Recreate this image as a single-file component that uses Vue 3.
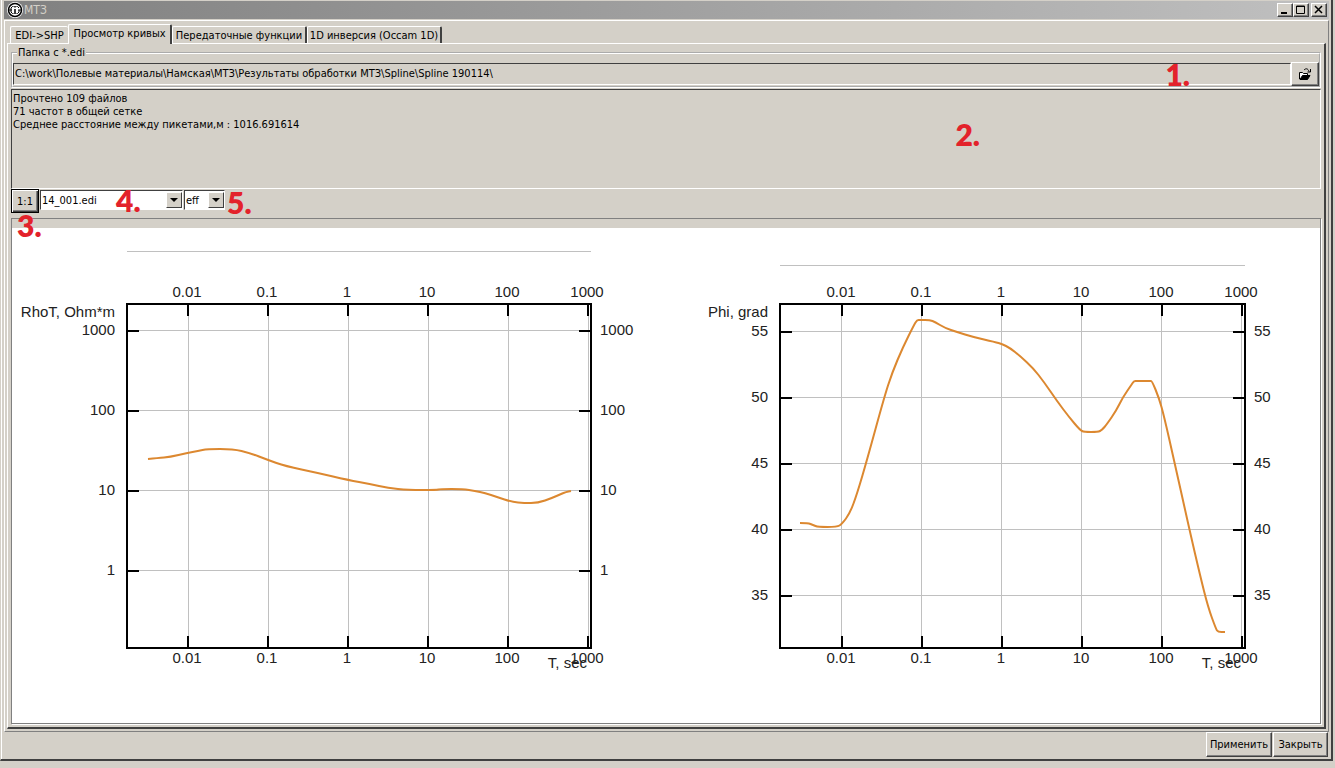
<template>
  <div class="window">
    <header class="title-bar">
      <svg class="logo" viewBox="0 0 16 16" aria-hidden="true">
        <circle cx="8" cy="8" r="8" fill="#fff" />
        <circle cx="8" cy="8" r="6.500" fill="none" stroke="#000" stroke-width="1.500" />
        <path d="M1 8h4M11 8h4M6.500 4.500H5.500L4 6v4l1.500 1.500h1M9.500 4.500h1L12 6M12 8v2l-1.500 1.500h-1" fill="none" stroke="#000" />
        <path d="M8 7v5M8 4v1.500" fill="none" stroke="#000" stroke-width="1.500" />
      </svg>
      <h1>МТЗ</h1>
      <div class="window-buttons">
        <button type="button" aria-label="Свернуть">
          <svg viewBox="0 0 12 10"><path d="M2 8h6" stroke="#000" stroke-width="2" /></svg>
        </button>
        <button type="button" aria-label="Развернуть">
          <svg viewBox="0 0 12 10"><path d="M1.500 1h8v7.500h-8zM1 1.500h9" fill="none" stroke="#000" /></svg>
        </button>
        <button type="button" class="close" aria-label="Закрыть окно">
          <svg viewBox="0 0 12 10"><path d="M2 1l7 7M9 1L2 8" stroke="#000" stroke-width="1.500" /></svg>
        </button>
      </div>
    </header>

    <main class="body">
      <nav class="tabs" role="tablist">
        <button
          v-for="tab in tabs"
          :key="tab.key"
          type="button"
          role="tab"
          :class="['tab', tab.key, { active: tab.key === activeTab }]"
          :aria-selected="tab.key === activeTab"
          @click="activeTab = tab.key"
        >{{ tab.label }}</button>
      </nav>

      <section class="page">
        <fieldset class="folder">
          <legend><label for="folder">Папка с *.edi</label></legend>
          <div class="folder-row">
            <input id="folder" v-model="folder" type="text" readonly />
            <button type="button" class="open" aria-label="Открыть папку">
              <svg viewBox="0 0 14 14">
                <path d="M1.500 12V5.500h3l1 1h4v2" fill="#fff" stroke="#000" />
                <path d="M2 12.500l2.500-4H12l-2.500 4z" fill="#000" stroke="#000" />
                <path d="M6 3c2-2 4-1.500 5 1.500M12.500 2v3H9.500" fill="none" stroke="#000" />
              </svg>
            </button>
          </div>
          <span class="mark mark-1">1.</span>
        </fieldset>

        <div class="log-wrap">
          <textarea v-model="log" class="log" aria-label="Журнал" readonly></textarea>
          <span class="mark mark-2">2.</span>
        </div>

        <div class="toolbar">
          <button type="button" class="scale">1:1</button>
          <div class="combo file">
            <select v-model="file" aria-label="Файл">
              <option>14_001.edi</option>
            </select>
            <span class="arrow"></span>
          </div>
          <div class="combo component">
            <select v-model="component" aria-label="Компонента">
              <option>eff</option>
            </select>
            <span class="arrow"></span>
          </div>
          <span class="mark mark-3">3.</span>
          <span class="mark mark-4">4.</span>
          <span class="mark mark-5">5.</span>
        </div>

        <div class="charts">
          <svg v-for="chart in charts" :key="chart.title" class="chart" viewBox="0 0 654 480" role="img" :aria-label="chart.title">
            <line class="grid" :x1="chart.left" :x2="chart.right" :y1="chart.rule" :y2="chart.rule" />
            <g class="grid">
              <line v-for="tick in chart.x" :key="tick.label" :x1="tick.at + chart.gridShift" :x2="tick.at + chart.gridShift" :y1="top" :y2="bottom" />
              <line v-for="tick in chart.y" :key="tick.label" :x1="chart.left" :x2="chart.right" :y1="tick.at - 0.5" :y2="tick.at - 0.5" />
            </g>
            <g class="axis">
              <rect :x="chart.left" :y="top" :width="chart.right - chart.left" :height="bottom - top" />
              <path v-for="tick in chart.x" :key="tick.label" :d="`M${tick.at} ${top}v12M${tick.at} ${bottom}v-12`" />
              <path v-for="tick in chart.y" :key="tick.label" :d="`M${chart.left} ${tick.at}h12M${chart.right} ${tick.at}h-12`" />
            </g>
            <path class="curve" :d="smooth(chart.points)" />
            <g class="labels">
              <g v-for="tick in chart.x" :key="tick.label" text-anchor="middle">
                <text :x="tick.at - 1" :y="top - 7">{{ tick.label }}</text>
                <text :x="tick.at - 1" :y="bottom + 15">{{ tick.label }}</text>
              </g>
              <g v-for="tick in chart.y" :key="tick.label">
                <text :x="chart.left - 12" :y="tick.at + 4" text-anchor="end">{{ tick.label }}</text>
                <text :x="chart.right + 9" :y="tick.at + 4">{{ tick.label }}</text>
              </g>
              <text :x="chart.left - 12" :y="top + 13" text-anchor="end">{{ chart.title }}</text>
              <text :x="chart.right - 4" :y="bottom + 20" text-anchor="end">T, sec</text>
            </g>
          </svg>
        </div>
      </section>
    </main>

    <footer class="actions">
      <button type="button" class="apply">Применить</button>
      <button type="button" class="dismiss">Закрыть</button>
    </footer>
  </div>
</template>

<script setup>
import { ref } from 'vue'

const tabs = [
  { key: 'shp', label: 'EDI->SHP' },
  { key: 'curves', label: 'Просмотр кривых' },
  { key: 'transfer', label: 'Передаточные функции' },
  { key: 'inversion', label: '1D инверсия (Occam 1D)' }
]

const activeTab = ref('curves')
const folder = ref('C:\\work\\Полевые материалы\\Намская\\МТЗ\\Результаты обработки МТЗ\\Spline\\Spline 190114\\')
const log = ref('Прочтено 109 файлов\n71 частот в общей сетке\nСреднее расстояние между пикетами,м : 1016.691614')
const file = ref('14_001.edi')
const component = ref('eff')

// vertical extent shared by both plots
const top = 76
const bottom = 420

const periods = ['0.01', '0.1', '1', '10', '100', '1000']

function ticks(labels, start, step) {
  return labels.map((label, i) => ({ label, at: start + i * step }))
}

// rounds the corners by running quadratic segments through the midpoints
function smooth(points) {
  const list = points.split(' ').map((pair) => pair.split(',').map(Number))
  const parts = [`M${list[0]}`]
  for (let i = 1; i < list.length - 1; i++) {
    const [x, y] = list[i]
    const [nextX, nextY] = list[i + 1]
    parts.push(`Q${x} ${y} ${(x + nextX) / 2} ${(y + nextY) / 2}`)
  }
  parts.push(`L${list[list.length - 1]}`)
  return parts.join('')
}

const charts = [
  {
    title: 'RhoT, Ohm*m',
    left: 115,
    right: 579,
    rule: 23.5,
    gridShift: 0.5,
    x: ticks(periods, 176, 80),
    y: ticks(['1000', '100', '10', '1'], 103, 80),
    points: '136,231 146,230 158,229 175,225 186,223 195,221 221,221 238,225 256,232 273,238 306,245 336,252 358,256 376,260 396,262 425,262 428,261 451,261 463,263 473,265 485,269 500,274 512,275 526,275 540,270 549,266 554,264 559,263'
  },
  {
    title: 'Phi, grad',
    left: 114,
    right: 579,
    rule: 37.5,
    gridShift: -0.5,
    x: ticks(periods, 176, 80),
    y: ticks(['55', '50', '45', '40', '35'], 104, 66),
    points: '134,295 142,295 147,297 152,299 171,299 176,296 184,285 191,266 201,232 218,170 226,145 237,119 248,97 251,92 254,92 264,92 269,94 279,100 291,104 307,109 329,114 336,116 344,120 354,128 367,140 378,154 391,173 403,189 414,202 418,204 432,204 436,202 441,196 450,183 457,169 466,156 468,153 471,153 484,153 486,153 493,170 498,188 508,232 524,304 534,347 542,379 550,401 552,404 559,404'
  }
]
</script>

<style>
body {
  background: #d4d0c8;
}
</style>

<style scoped>
* {
  box-sizing: border-box;
}

.window {
  display: flex;
  flex-direction: column;
  min-height: calc(100vh - 7px);
  margin-right: 2px;
  margin-bottom: 7px;
  padding: 1px 2px 0 3px;
  border: solid;
  border-width: 0 2px 2px 1px;
  border-color: #d4d0c8 #404040 #404040 #d4d0c8;
  box-shadow: inset 1px 0 #fff;
  color: #000;
}

.window,
button,
input,
select,
textarea {
  font-family: "DejaVu Sans Condensed", Tahoma, "DejaVu Sans", sans-serif;
  font-size: 11px;
  line-height: 13px;
}

button {
  padding: 0;
  border: 1px solid;
  border-color: #fff #404040 #404040 #fff;
  background: #d4d0c8;
  box-shadow: inset -1px -1px #808080;
  color: #000;
}

.title-bar {
  display: flex;
  align-items: center;
  height: 18px;
  padding: 0 2px 0 3px;
  background: linear-gradient(90deg, #808080, #c0c0c0);
}

.logo {
  width: 16px;
  height: 16px;
}

h1 {
  margin: 0 0 0 1px;
  font-size: 12px;
  font-weight: 400;
  color: #d4d0c8;
}

.window-buttons {
  display: flex;
  margin-left: auto;
}

.window-buttons button {
  width: 16px;
  height: 14px;
}

.window-buttons .close {
  margin-left: 2px;
}

.window-buttons svg {
  display: block;
  width: 12px;
  height: 10px;
  margin: 1px;
}

.body {
  display: flex;
  flex: 1;
  flex-direction: column;
  margin-top: 1px;
  padding: 3px 2px 2px;
  border: 1px solid;
  border-color: #fff #808080 #808080 #fff;
}

.tabs {
  display: flex;
  align-items: flex-end;
  height: 19px;
  margin-left: 3px;
}

.tab {
  height: 17px;
  border-width: 1px 2px 0 1px;
  border-radius: 2px 2px 0 0;
  box-shadow: none;
  white-space: nowrap;
}

.shp {
  width: 58px;
  border-right: 0;
}

.curves {
  width: 104px;
}

.transfer,
.inversion {
  width: 135px;
}

.tab.active {
  z-index: 1;
  height: 20px;
  margin-bottom: -1px;
  padding-bottom: 2px;
}

.page {
  display: flex;
  flex: 1;
  flex-direction: column;
  padding: 2px 3px 3px;
  border: solid;
  border-width: 1px 2px 2px 1px;
  border-color: #fff #404040 #404040 #fff;
}

.folder {
  position: relative;
  min-width: 0;
  margin: 0;
  padding: 3px 0 0;
  border: 2px groove #fff;
}

legend {
  margin-left: 4px;
  padding: 0 1px;
}

.folder-row {
  display: flex;
}

.folder input {
  flex: 1;
  min-width: 0;
  height: 22px;
  margin-top: 1px;
  padding: 0 1px 2px;
  border: 1px solid;
  border-color: #404040 #fff #fff #404040;
  background: #d4d0c8;
  outline: 0;
}

.open {
  width: 28px;
  height: 24px;
}

.open svg {
  display: block;
  width: 14px;
  height: 14px;
  margin: auto;
}

.log-wrap {
  position: relative;
  margin-top: 1px;
}

.log {
  display: block;
  width: 100%;
  height: 100px;
  padding: 2px 1px;
  border: 1px solid;
  border-color: #404040 #fff #fff #404040;
  background: #d4d0c8;
  outline: 0;
  resize: none;
}

.toolbar {
  position: relative;
  display: flex;
  gap: 1px;
  height: 24px;
}

.scale {
  width: 28px;
  height: 24px;
  border-color: #000;
  box-shadow: inset 1px 1px #fff, inset -1px -1px #404040, inset -2px -2px #808080;
}

.combo {
  position: relative;
  height: 20px;
  margin-top: 1px;
}

.file {
  width: 143px;
}

.component {
  width: 41px;
}

.combo select {
  width: 100%;
  height: 20px;
  padding: 0 0 0 1px;
  border: 1px solid;
  border-color: #404040 #fff #fff #404040;
  border-radius: 0;
  background: #fff;
  appearance: none;
}

.arrow {
  position: absolute;
  top: 2px;
  right: 1px;
  width: 16px;
  height: 16px;
  border: 1px solid;
  border-color: #fff #404040 #404040 #fff;
  background: #d4d0c8;
  pointer-events: none;
}

.arrow::before {
  content: "";
  position: absolute;
  top: 5px;
  left: 3px;
  border: 4px solid transparent;
  border-top-color: #000;
  border-bottom: 0;
}

.charts {
  display: grid;
  flex: 1;
  grid-template-columns: 1fr 1fr;
  margin-top: 5px;
  padding-top: 9px;
  border: 1px solid #808080;
  background: linear-gradient(#d4d0c8 9px, #fff 9px);
  box-shadow: 1px 1px #fff;
}

.chart {
  display: block;
  width: 100%;
}

.grid {
  stroke: #c0c0c0;
}

.axis {
  fill: none;
  stroke: #000;
  stroke-width: 2px;
}

.curve {
  fill: none;
  stroke: #dc8830;
  stroke-width: 2px;
  stroke-linejoin: round;
}

.labels {
  fill: #222;
  font-family: "Liberation Sans", Arial, sans-serif;
  font-size: 15px;
}

.mark {
  position: absolute;
  z-index: 2;
  color: #e3222b;
  font-family: Lato, Calibri, sans-serif;
  font-size: 30px;
  font-weight: 800;
  line-height: 30px;
  pointer-events: none;
}

.mark-1 {
  top: 0;
  right: 129px;
}

.mark-2 {
  top: 30px;
  right: 341px;
}

.mark-3 {
  top: 21px;
  left: 6px;
}

.mark-4 {
  top: -4px;
  left: 105px;
}

.mark-5 {
  top: -2px;
  left: 216px;
}

.actions {
  display: flex;
  justify-content: flex-end;
  gap: 1px;
  padding: 0 1px 2px;
}

.actions button {
  height: 25px;
}

.apply {
  width: 66px;
}

.dismiss {
  width: 55px;
}
</style>
